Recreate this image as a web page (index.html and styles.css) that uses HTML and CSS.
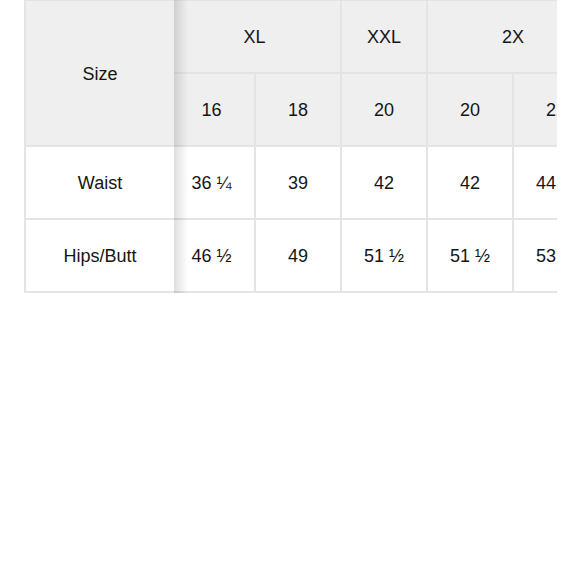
FILE: index.html
```html
<!DOCTYPE html>
<html>
<head>
<meta charset="utf-8">
<link rel="stylesheet" href="styles.css">
</head>
<body>
<div class="chart">
  <table class="fixed">
    <tr><th class="size">Size</th></tr>
    <tr><td>Waist</td></tr>
    <tr><td>Hips/Butt</td></tr>
  </table>
  <div class="scroll">
    <table class="grid">
      <colgroup><col class="c"><col class="c"><col class="c"><col class="c"><col class="c"></colgroup>
      <tr class="head top"><th colspan="2">XL</th><th>XXL</th><th colspan="2">2X</th></tr>
      <tr class="head"><th>16</th><th>18</th><th>20</th><th>20</th><th>22</th></tr>
      <tr><td>36 ¼</td><td>39</td><td>42</td><td>42</td><td>44 ½</td></tr>
      <tr><td>46 ½</td><td>49</td><td>51 ½</td><td>51 ½</td><td>53 ½</td></tr>
    </table>
  </div>
</div>
</body>
</html>
```
FILE: styles.css
```css
html, body {
  margin: 0;
  padding: 0;
  background: #fff;
}
body {
  font-family: "Liberation Sans", Arial, Helvetica, sans-serif;
  font-size: 18px;
  color: #151515;
}
.chart {
  display: flex;
  margin-left: 24px;
  width: 533px;
  overflow: hidden;
}
table {
  border-collapse: collapse;
  table-layout: fixed;
}
th, td {
  font-weight: normal;
  text-align: center;
  vertical-align: middle;
  padding: 3px 0 0;
  height: 73px;
  border: 2px solid #e4e4e4;
  box-sizing: border-box;
  white-space: nowrap;
}
.fixed {
  width: 150px;
  flex: none;
}
.fixed th, .fixed td {
  border-right: none;
}
.fixed .size {
  background: #efefef;
  height: 145px;
}
.fixed tr:first-child th {
  border-top-width: 1px;
}
.scroll {
  position: relative;
  flex: 1;
  min-width: 0;
  overflow: hidden;
}
.scroll::before {
  content: "";
  position: absolute;
  left: 0;
  top: 0;
  bottom: 0;
  width: 14px;
  background: linear-gradient(to right, rgba(0,0,0,0.13), rgba(0,0,0,0));
  z-index: 2;
}
.grid {
  margin-left: -5px;
  width: 430px;
}
.grid .c {
  width: 86px;
}
.grid .top th {
  border-top-width: 1px;
  height: 72px;
}
.grid .head th {
  background: #efefef;
}
.grid tr td:first-child, .grid tr th:first-child {
  border-left: none;
}
```
